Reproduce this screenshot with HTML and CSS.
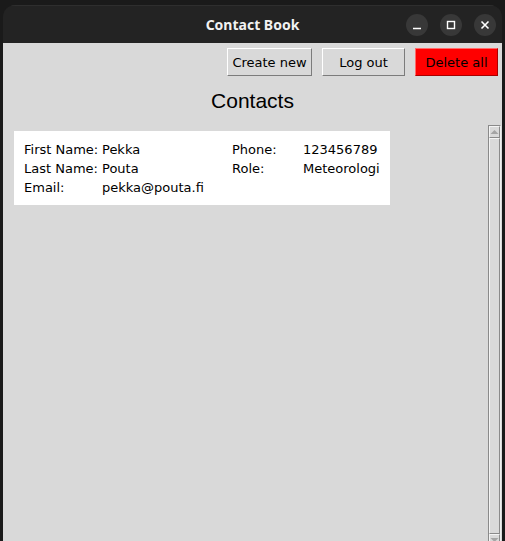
FILE: index.html
```html
<!DOCTYPE html>
<html>
<head>
<meta charset="utf-8">
<link rel="stylesheet" href="styles.css">
</head>
<body>
<div class="window">
  <div class="titlebar">
    <div></div>
    <div class="title">Contact Book</div>
    <div class="controls">
      <span class="ctl"><svg width="22" height="22" viewBox="0 0 22 22"><line x1="7" y1="14.5" x2="15" y2="14.5" stroke="#fff" stroke-width="1.6"/></svg></span>
      <span class="ctl"><svg width="22" height="22" viewBox="0 0 22 22"><rect x="7.5" y="7.5" width="7" height="7" fill="none" stroke="#fff" stroke-width="1.4"/></svg></span>
      <span class="ctl"><svg width="22" height="22" viewBox="0 0 22 22"><path d="M7.5 7.5 L14.5 14.5 M14.5 7.5 L7.5 14.5" stroke="#fff" stroke-width="1.6"/></svg></span>
    </div>
  </div>
  <div class="content">
    <div class="toolbar">
      <button class="btn btn-create">Create new</button>
      <button class="btn btn-logout">Log out</button>
      <button class="btn btn-danger">Delete all</button>
    </div>
    <h1 class="heading">Contacts</h1>
    <div class="lower">
      <div class="canvas">
        <div class="card">
          <span class="lbl">First Name:</span><span class="val">Pekka</span><span class="lbl">Phone:</span><span class="val">123456789</span>
          <span class="lbl">Last Name:</span><span class="val">Pouta</span><span class="lbl">Role:</span><span class="val">Meteorologi</span>
          <span class="lbl">Email:</span><span class="val">pekka@pouta.fi</span><span></span><span></span>
        </div>
      </div>
      <div class="scrollbar">
        <div class="arrow"><svg width="11" height="10" viewBox="0 0 11 10"><polygon points="1.5,7 5.5,3 9.5,7" fill="#a4a4a4"/></svg></div>
        <div class="thumb"></div>
        <div class="arrow"><svg width="11" height="10" viewBox="0 0 11 10"><polygon points="1.5,3 5.5,7 9.5,3" fill="#a4a4a4"/></svg></div>
      </div>
    </div>
  </div>
</div>
</body>
</html>
```
FILE: styles.css
```css
html, body {
  margin: 0;
  padding: 0;
  background: #1a1a1a;
  overflow: hidden;
}
body {
  width: 505px;
  height: 541px;
  font-family: "DejaVu Sans", sans-serif;
}
.window {
  margin: 5px 0 0 3px;
  width: 499px;
  height: 536px;
  display: flex;
  flex-direction: column;
  border-radius: 12px 12px 0 0;
  overflow: hidden;
}
.titlebar {
  height: 38px;
  flex: none;
  background: #232323;
  display: grid;
  grid-template-columns: 1fr auto 1fr;
  align-items: center;
  box-shadow: inset 0 1px 0 #2e2e2e;
}
.title {
  font-family: "Noto Sans", sans-serif;
  font-weight: bold;
  font-size: 14px;
  color: #f2f2f2;
  padding-top: 1px;
}
.controls {
  display: flex;
  justify-content: flex-end;
  gap: 12px;
  padding-right: 6px;
  padding-top: 1px;
}
.ctl {
  width: 22px;
  height: 22px;
  border-radius: 50%;
  background: #383838;
  display: block;
}
.ctl svg { display: block; }
.content {
  flex: 1;
  background: #d9d9d9;
  display: flex;
  flex-direction: column;
  min-height: 0;
}
.toolbar {
  display: flex;
  justify-content: flex-end;
  gap: 10px;
  padding: 5px 4px 0 0;
}
.btn {
  height: 28px;
  margin: 0;
  padding: 0;
  font-family: "DejaVu Sans", sans-serif;
  font-size: 13px;
  color: #000;
  background: #d9d9d9;
  border: 1px solid;
  border-color: #ffffff #7c7c7c #7c7c7c #ffffff;
  border-radius: 0;
}
.btn-create { width: 85px; }
.btn-logout { width: 83px; }
.btn-danger {
  width: 83px;
  background: #ff0000;
  border-color: #ff6a6a #a80000 #a80000 #ff6a6a;
}
.heading {
  margin: 13px 0 12px;
  text-align: center;
  font-family: "Liberation Sans", Arial, sans-serif;
  font-weight: normal;
  font-size: 21px;
  line-height: 24px;
  color: #000;
}
.lower {
  flex: 1;
  display: flex;
  min-height: 0;
  overflow: hidden;
}
.canvas {
  flex: 1;
  padding: 6px 0 0 11px;
}
.card {
  width: 356px;
  background: #fff;
  padding: 9px 10px 8px 10px;
  display: grid;
  grid-template-columns: 78px 130px 71px auto;
  font-size: 13px;
  line-height: 19px;
  color: #000;
  white-space: nowrap;
}
.scrollbar {
  width: 11px;
  height: 420px;
  margin-right: 1px;
  flex: none;
  border: 1px solid;
  border-color: #8a8a8a #f0f0f0 #f0f0f0 #8a8a8a;
  background: #c8c8c8;
  display: flex;
  flex-direction: column;
}
.arrow {
  height: 10px;
  flex: none;
  background: #d9d9d9;
  border: 1px solid;
  border-color: #f4f4f4 #8a8a8a #8a8a8a #f4f4f4;
  box-sizing: content-box;
  width: 9px;
  overflow: hidden;
}
.arrow svg { display: block; margin-left: -1px; }
.thumb {
  flex: 1;
  background: #d9d9d9;
  border: 1px solid;
  border-color: #f4f4f4 #8a8a8a #8a8a8a #f4f4f4;
}
```
